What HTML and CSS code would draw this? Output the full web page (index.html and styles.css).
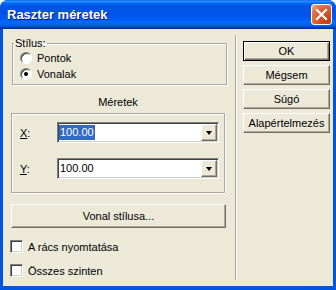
FILE: index.html
```html
<!DOCTYPE html>
<html lang="hu">
<head>
    <meta charset="UTF-8">
    <title>Raszter méretek</title>
    <link rel="stylesheet" href="styles.css">
</head>
<body>
    <div class="window">
        <div class="titlebar">
            <span class="title">Raszter méretek</span>
            <span class="close">
                <svg width="13" height="13" viewBox="0 0 13 13">
                    <path d="M2 2 L11 11 M11 2 L2 11" stroke="#fff" stroke-width="2.2" stroke-linecap="square"/>
                </svg>
            </span>
        </div>
        <div class="client">
            <div class="left">
                <fieldset class="group">
                    <legend>Stílus:</legend>
                    <label class="radio"><span class="radio-box"></span>Pontok</label>
                    <label class="radio"><span class="radio-box checked"></span>Vonalak</label>
                </fieldset>

                <div class="caption">Méretek</div>
                <div class="box">
                    <div class="field">
                        <span class="field-label"><u>X</u>:</span>
                        <div class="combo">
                            <span class="value selected">100.00</span>
                            <span class="drop"></span>
                        </div>
                    </div>
                    <div class="field">
                        <span class="field-label"><u>Y</u>:</span>
                        <div class="combo">
                            <span class="value">100.00</span>
                            <span class="drop"></span>
                        </div>
                    </div>
                </div>

                <div class="button wide">Vonal stílusa...</div>

                <label class="check"><span class="check-box"></span>A rács nyomtatása</label>
                <label class="check"><span class="check-box"></span>Összes szinten</label>
            </div>
            <div class="separator"></div>
            <div class="right">
                <div class="button default">OK</div>
                <div class="button">Mégsem</div>
                <div class="button">Súgó</div>
                <div class="button">Alapértelmezés</div>
            </div>
        </div>
    </div>
</body>
</html>
```

FILE: styles.css
```css
body {
    margin: 0;
    background: #fff;
    font-family: "Liberation Sans", Arial, sans-serif;
    font-size: 11px;
    color: #000;
}

.window {
    width: 336px;
    height: 290px;
    display: flex;
    flex-direction: column;
    background: #0054e3;
    border-radius: 8px 8px 0 0;
}

.titlebar {
    height: 29px;
    flex: none;
    display: flex;
    align-items: center;
    padding: 0 4px 0 7px;
    border-radius: 8px 8px 0 0;
    background: linear-gradient(to bottom, #0058ee 0%, #3593ff 4%, #288eff 6%, #127dff 8%, #036ffc 10%, #0262ee 14%, #0057e5 20%, #0054e3 24%, #0055eb 56%, #005bf5 66%, #026afe 76%, #0062ef 86%, #0052d6 92%, #0040ab 94%, #003092 100%);
}

.title {
    flex: 1;
    color: #fff;
    font-weight: bold;
    font-size: 13px;
    text-shadow: 1px 1px #0f1089;
}

.close {
    width: 21px;
    height: 21px;
    box-sizing: border-box;
    display: flex;
    align-items: center;
    justify-content: center;
    border: 1px solid #fff;
    border-radius: 3px;
    background: radial-gradient(circle at 85% 85%, #c13a10 0%, #d9582c 50%, #e0774f 75%, #f2b49a 100%);
}

.client {
    flex: 1;
    margin: 0 3px 4px;
    padding: 0 3px 0 8px;
    display: flex;
    background: #ece9d8;
}

.left {
    width: 216px;
    padding-top: 8px;
}

.group {
    width: 215px;
    box-sizing: border-box;
    margin: 0 0 0 1px;
    padding: 0 0 2px 1px;
    border: 1px solid #aca899;
    box-shadow: inset 1px 1px #fff, 1px 1px #fff;
}

.group legend {
    padding: 0 1px;
    line-height: 13px;
}

.radio {
    height: 16px;
    display: flex;
    align-items: center;
}

.radio-box {
    width: 12px;
    height: 12px;
    box-sizing: border-box;
    margin: 0 5px 0 6px;
    border-radius: 50%;
    border: 1px solid;
    border-color: #808080 #fff #fff #808080;
    background: #fff;
    box-shadow: inset 1px 1px #404040;
    display: flex;
    align-items: center;
    justify-content: center;
}

.radio-box.checked::after {
    content: "";
    width: 4px;
    height: 4px;
    border-radius: 50%;
    background: #000;
}

.caption {
    margin-top: 11px;
    width: 214px;
    line-height: 13px;
    text-align: center;
}

.box {
    width: 214px;
    box-sizing: border-box;
    margin-top: 4px;
    padding: 8px 5px 13px 8px;
    border: 1px solid #aca899;
    box-shadow: inset 1px 1px #fff, 1px 1px #fff;
    display: flex;
    flex-direction: column;
    gap: 15px;
}

.field {
    display: flex;
    align-items: center;
}

.field-label {
    width: 37px;
}

.combo {
    width: 162px;
    height: 21px;
    box-sizing: border-box;
    display: flex;
    align-items: center;
    padding: 1px;
    background: #fff;
    border: 1px solid;
    border-color: #808080 #fff #fff #808080;
    box-shadow: inset 1px 1px #404040, inset -1px -1px #d4d0c8;
}

.value {
    padding: 0 1px;
    line-height: 15px;
}

.value.selected {
    background: #316ac5;
    color: #fff;
}

.drop {
    margin-left: auto;
    width: 16px;
    height: 17px;
    box-sizing: border-box;
    display: flex;
    align-items: center;
    justify-content: center;
    background: #ece9d8;
    border: 1px solid;
    border-color: #fff #716f64 #716f64 #fff;
    box-shadow: inset -1px -1px #aca899;
}

.drop::after {
    content: "";
    border-style: solid;
    border-width: 4px 3.5px 0;
    border-color: #000 transparent transparent;
}

.button {
    height: 20px;
    box-sizing: border-box;
    display: flex;
    align-items: center;
    justify-content: center;
    background: #ece9d8;
    border: 1px solid;
    border-color: #fff #716f64 #716f64 #fff;
    box-shadow: inset -1px -1px #aca899;
}

.button.default {
    border-color: #000;
    box-shadow: inset 1px 1px #fff, inset -1px -1px #716f64, inset -2px -2px #aca899;
}

.button.wide {
    width: 215px;
    height: 24px;
    margin-top: 11px;
}

.check {
    height: 13px;
    display: flex;
    align-items: center;
    margin-top: 12px;
}

.check + .check {
    margin-top: 11px;
}

.check-box {
    width: 13px;
    height: 13px;
    box-sizing: border-box;
    margin: 0 5px 0 -1px;
    background: #fff;
    border: 1px solid;
    border-color: #808080 #fff #fff #808080;
    box-shadow: inset 1px 1px #404040, inset -1px -1px #d4d0c8;
}

.separator {
    width: 1px;
    margin: 6px 0 6px 8px;
    background: #aca899;
    border-right: 1px solid #fff;
}

.right {
    width: 87px;
    margin-left: 6px;
    padding-top: 12px;
    display: flex;
    flex-direction: column;
    gap: 4px;
}
```
